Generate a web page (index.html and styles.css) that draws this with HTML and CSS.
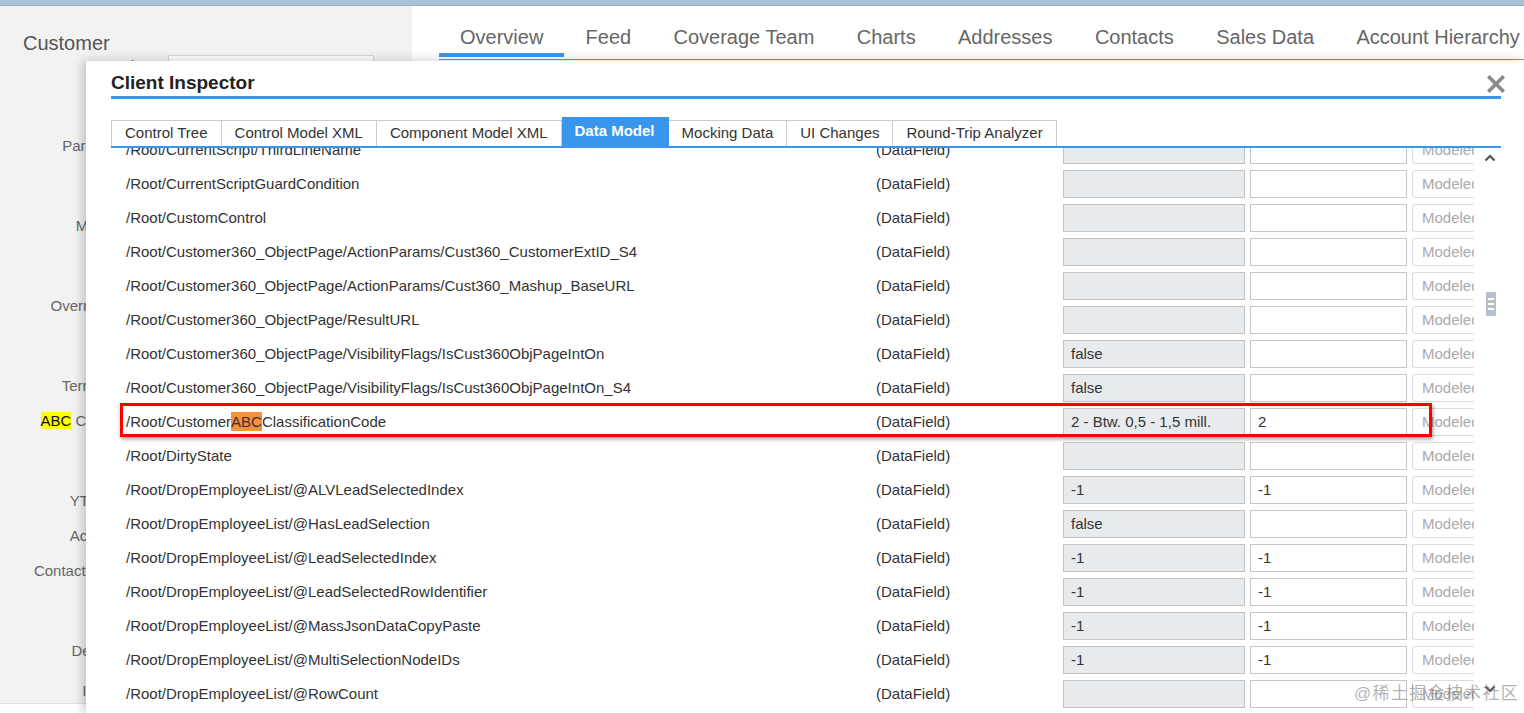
FILE: index.html
```html
<!DOCTYPE html>
<html lang="en">
<head>
	<meta charset="UTF-8">
	<title>Client Inspector - Data Model</title>
	<link rel="stylesheet" href="styles.css">
</head>
<body>
	<div class="topbar"></div>
	<div class="page">
		<aside class="side">
			<h2 class="side-title">Customer</h2>
			<div class="form">
				<div class="field tall"><label>Phone</label><span class="box"></span></div>
				<div class="field tall"><label>Parent Account</label><span class="box"></span></div>
				<div class="field tall"><label>Main Contact</label><span class="box"></span></div>
				<div class="field tall"><label>Override Reason</label><span class="box"></span></div>
				<div class="field"><label>Territory Teams</label><span class="box"></span></div>
				<div class="field tall"><label><span class="hl-yellow">ABC</span> Classification</label><span class="box"></span></div>
				<div class="field"><label>YTD Revenue</label><span class="box"></span></div>
				<div class="field"><label>Activity Status</label><span class="box"></span></div>
				<div class="field tall"><label>Contact Permission</label><span class="box"></span></div>
				<div class="field low"><label>Delivery Plant</label><span class="box"></span></div>
				<div class="field"><label>Inside Sales</label><span class="box"></span></div>
			</div>
		</aside>
		<main class="main">
			<nav class="nav">
				<a class="nav-item active">Overview</a>
				<a class="nav-item">Feed</a>
				<a class="nav-item">Coverage Team</a>
				<a class="nav-item">Charts</a>
				<a class="nav-item">Addresses</a>
				<a class="nav-item">Contacts</a>
				<a class="nav-item">Sales Data</a>
				<a class="nav-item">Account Hierarchy</a>
			</nav>
		</main>
	</div>

	<!-- 弹出的 Client Inspector 窗口 -->
	<section class="dialog">
		<header class="dlg-head">
			Client Inspector
			<svg class="dlg-close" width="18" height="18" viewBox="0 0 18 18">
				<path d="M2.5 2.5 L15.5 15.5 M15.5 2.5 L2.5 15.5" stroke="#8a8a8a" stroke-width="3.6" stroke-linecap="square"/>
			</svg>
		</header>
		<div class="tabs">
			<span class="tab">Control Tree</span>
			<span class="tab">Control Model XML</span>
			<span class="tab">Component Model XML</span>
			<span class="tab active">Data Model</span>
			<span class="tab">Mocking Data</span>
			<span class="tab">UI Changes</span>
			<span class="tab">Round-Trip Analyzer</span>
		</div>
		<div class="dlg-body">
			<div class="rows">
				<div class="list">
					<div class="row"><span class="path">/Root/CurrentScript/ThirdLineName</span><span class="type">(DataField)</span><span class="val"></span><span class="cur"></span><span class="mod">Modeled</span></div>
					<div class="row"><span class="path">/Root/CurrentScriptGuardCondition</span><span class="type">(DataField)</span><span class="val"></span><span class="cur"></span><span class="mod">Modeled</span></div>
					<div class="row"><span class="path">/Root/CustomControl</span><span class="type">(DataField)</span><span class="val"></span><span class="cur"></span><span class="mod">Modeled</span></div>
					<div class="row"><span class="path">/Root/Customer360_ObjectPage/ActionParams/Cust360_CustomerExtID_S4</span><span class="type">(DataField)</span><span class="val"></span><span class="cur"></span><span class="mod">Modeled</span></div>
					<div class="row"><span class="path">/Root/Customer360_ObjectPage/ActionParams/Cust360_Mashup_BaseURL</span><span class="type">(DataField)</span><span class="val"></span><span class="cur"></span><span class="mod">Modeled</span></div>
					<div class="row"><span class="path">/Root/Customer360_ObjectPage/ResultURL</span><span class="type">(DataField)</span><span class="val"></span><span class="cur"></span><span class="mod">Modeled</span></div>
					<div class="row"><span class="path">/Root/Customer360_ObjectPage/VisibilityFlags/IsCust360ObjPageIntOn</span><span class="type">(DataField)</span><span class="val">false</span><span class="cur"></span><span class="mod">Modeled</span></div>
					<div class="row"><span class="path">/Root/Customer360_ObjectPage/VisibilityFlags/IsCust360ObjPageIntOn_S4</span><span class="type">(DataField)</span><span class="val">false</span><span class="cur"></span><span class="mod">Modeled</span></div>
					<div class="row marked"><span class="path">/Root/Customer<span class="hl-orange">ABC</span>ClassificationCode</span><span class="type">(DataField)</span><span class="val">2 - Btw. 0,5 - 1,5 mill.</span><span class="cur">2</span><span class="mod">Modeled</span><i class="mark"></i></div>
					<div class="row"><span class="path">/Root/DirtyState</span><span class="type">(DataField)</span><span class="val"></span><span class="cur"></span><span class="mod">Modeled</span></div>
					<div class="row"><span class="path">/Root/DropEmployeeList/@ALVLeadSelectedIndex</span><span class="type">(DataField)</span><span class="val">-1</span><span class="cur">-1</span><span class="mod">Modeled</span></div>
					<div class="row"><span class="path">/Root/DropEmployeeList/@HasLeadSelection</span><span class="type">(DataField)</span><span class="val">false</span><span class="cur"></span><span class="mod">Modeled</span></div>
					<div class="row"><span class="path">/Root/DropEmployeeList/@LeadSelectedIndex</span><span class="type">(DataField)</span><span class="val">-1</span><span class="cur">-1</span><span class="mod">Modeled</span></div>
					<div class="row"><span class="path">/Root/DropEmployeeList/@LeadSelectedRowIdentifier</span><span class="type">(DataField)</span><span class="val">-1</span><span class="cur">-1</span><span class="mod">Modeled</span></div>
					<div class="row"><span class="path">/Root/DropEmployeeList/@MassJsonDataCopyPaste</span><span class="type">(DataField)</span><span class="val">-1</span><span class="cur">-1</span><span class="mod">Modeled</span></div>
					<div class="row"><span class="path">/Root/DropEmployeeList/@MultiSelectionNodeIDs</span><span class="type">(DataField)</span><span class="val">-1</span><span class="cur">-1</span><span class="mod">Modeled</span></div>
					<div class="row"><span class="path">/Root/DropEmployeeList/@RowCount</span><span class="type">(DataField)</span><span class="val"></span><span class="cur"></span><span class="mod">Modeled</span></div>
				</div>
			</div>
			<div class="scrollbar">
				<svg class="sb-arrow" width="12" height="8" viewBox="0 0 12 8"><path d="M1.5 6.5 L6 2 L10.5 6.5" fill="none" stroke="#555" stroke-width="2.2"/></svg>
				<div class="sb-thumb"><i></i><i></i><i></i></div>
				<svg class="sb-arrow down" width="12" height="8" viewBox="0 0 12 8"><path d="M1.5 1.5 L6 6 L10.5 1.5" fill="none" stroke="#555" stroke-width="2.2"/></svg>
			</div>
		</div>
		<div class="watermark">@稀土掘金技术社区</div>
	</section>
</body>
</html>
```

FILE: styles.css
```css
html,body {
	margin: 0;
	height: 713px;
	overflow: hidden;
	font-family: "Liberation Sans", Arial, "Noto Sans CJK SC", sans-serif;
	color: #333;
	background: #fff;
}
.topbar {
	height: 5px;
	background: #a9c1d9;
	border-bottom: 1px solid #98b0c9;
}
.page {
	display: flex;
	height: 707px;
}

/* 左侧客户信息 */
.side {
	width: 412px;
	height: 697px;
	background: #f2f2f2;
	border-bottom: 1px solid #e2e2e2;
	flex-shrink: 0;
}
.side-title {
	margin: 25px 0 0 23px;
	font-size: 20px;
	font-weight: normal;
	line-height: 24px;
	color: #555;
}
.field {
	display: flex;
	height: 35px;
}
.field.tall {
	height: 80px;
}
.field.low {
	height: 40px;
}
.field label {
	width: 164px;
	padding-right: 4px;
	text-align: right;
	font-size: 15px;
	line-height: 22px;
	color: #666;
	white-space: nowrap;
}
.field .box {
	width: 206px;
	height: 28px;
	background: #fff;
	border: 1px solid #d6d6d6;
	box-sizing: border-box;
}
.hl-yellow {
	background: #ffff00;
	color: #111;
}

/* 顶部导航 */
.main {
	flex: 1;
	padding-left: 27px;
}
.nav {
	display: flex;
	border-bottom: 1px solid #5aa3e8;
	padding-bottom: 2px;
	white-space: nowrap;
}
.nav-item {
	padding: 20px 21.2px 5px;
	font-size: 20px;
	line-height: 22px;
	color: #666;
	border-bottom: 4px solid transparent;
}
.nav-item.active {
	padding: 20px 21px 5px;
	border-bottom-color: #3a96ec;
}

/* 弹窗 */
.dialog {
	position: absolute;
	left: 86px;
	top: 61px;
	right: 0;
	bottom: 0;
	padding: 0 23px 0 25px;
	background: #fff;
	box-shadow: -3px 0 10px rgba(0,0,0,0.22);
	display: flex;
	flex-direction: column;
}
.dlg-head {
	position: relative;
	padding: 10px 0 1px;
	font-size: 19px;
	line-height: 24px;
	font-weight: bold;
	color: #222;
	border-bottom: 3px solid #3a96ec;
}
.dlg-close {
	position: absolute;
	right: -4px;
	top: 14px;
}
.tabs {
	display: flex;
	align-items: flex-end;
	padding-top: 18px;
	border-bottom: 2px solid #3a96ec;
}
.tab {
	height: 26px;
	box-sizing: border-box;
	padding: 0 13px;
	border: 1px solid #ccc;
	border-left: none;
	border-bottom: none;
	font-size: 15px;
	line-height: 24px;
	color: #333;
	white-space: nowrap;
}
.tab:first-child {
	border-left: 1px solid #ccc;
}
.tab.active {
	height: 29px;
	line-height: 25px;
	background: #3a96ec;
	border-color: #3a96ec;
	color: #fff;
	font-weight: bold;
}
.dlg-body {
	flex: 1;
	display: flex;
	overflow: hidden;
}
.rows {
	flex: 1;
	overflow: hidden;
}
.list {
	margin-top: -15px;
}
.row {
	position: relative;
	display: flex;
	align-items: center;
	height: 34px;
	padding-left: 15px;
	font-size: 15px;
	line-height: 17px;
	white-space: nowrap;
}
.path {
	width: 750px;
	flex-shrink: 0;
	padding-bottom: 1px;
}
.type {
	width: 187px;
	flex-shrink: 0;
	padding-bottom: 1px;
}
.val, .cur, .mod {
	height: 28px;
	box-sizing: border-box;
	padding-left: 7px;
	line-height: 25px;
	flex-shrink: 0;
	overflow: hidden;
}
.val {
	width: 182px;
	margin-right: 5px;
	background: #e8ebee;
	border: 1px solid #c3c3c3;
}
.cur {
	width: 157px;
	margin-right: 5px;
	border: 1px solid #c6c6c6;
}
.mod {
	width: 110px;
	padding-left: 9px;
	border: 1px solid #dcdcdc;
	border-radius: 3px 0 0 3px;
	color: #aaa;
}
.hl-orange {
	background: #f6913c;
	padding: 1px 0;
}
.mark {
	position: absolute;
	left: 9px;
	top: -2px;
	width: 1312px;
	height: 34px;
	box-sizing: border-box;
	border: 3px solid #f00;
	box-shadow: 1px 2px 4px rgba(0,0,0,0.4);
}

/* 滚动条 */
.scrollbar {
	width: 27px;
	flex-shrink: 0;
	display: flex;
	flex-direction: column;
	padding-left: 10px;
	box-sizing: border-box;
}
.sb-arrow {
	margin-top: 6px;
}
.sb-arrow.down {
	margin-top: auto;
	margin-bottom: 20px;
}
.sb-thumb {
	width: 10px;
	height: 24px;
	margin: 130px 0 0 2px;
	background: #b7c1cd;
	display: flex;
	flex-direction: column;
	justify-content: center;
	align-items: center;
	gap: 3px;
}
.sb-thumb i {
	width: 6px;
	height: 2px;
	background: #fff;
}
.watermark {
	position: absolute;
	right: 5px;
	bottom: 9px;
	font-size: 17px;
	color: rgba(110,110,110,0.55);
	letter-spacing: 1.3px;
}
```
